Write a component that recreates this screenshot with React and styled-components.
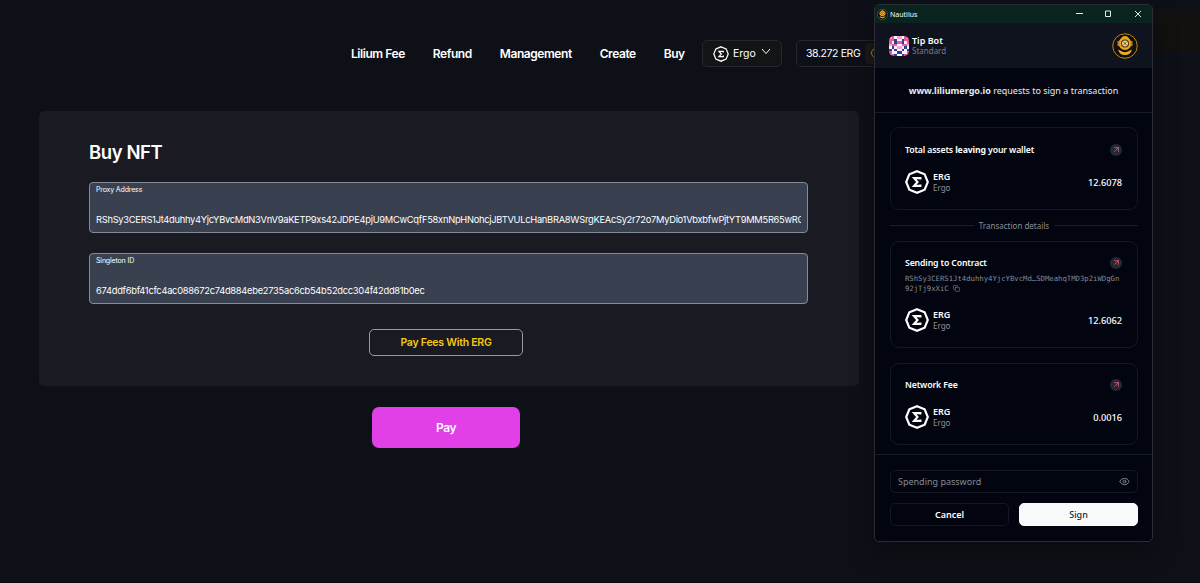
import React from "react";
import styled, { createGlobalStyle } from "styled-components";
import { LuArrowUpRight, LuCopy, LuEye } from "react-icons/lu";

const ADDRESS =
  "RShSy3CERS1Jt4duhhy4YjcYBvcMdN3VnV9aKETP9xs42JDPE4pjU9MCwCqfF58xnNpHNohcjJBTVULcHanBRA8WSrgKEAcSy2r72o7MyDio1VbxbfwPjtYT9MM5R65wRG";
const SINGLETON =
  "674ddf6bf41cfc4ac088672c74d884ebe2735ac6cb54b52dcc304f42dd81b0ec";

const LINKS = ["Lilium Fee", "Refund", "Management", "Create", "Buy"];

// p: pink, b: blue, w: white, l: light pink
const AVATAR = [
  "lpwllwpl",
  "ppbwwbpp",
  "pwbppbwp",
  "lppwwppl",
  "wbwllwbw",
  "bwbwwbwb",
  "pwwbbwwp",
  "lpbwwbpl",
];
const AVATAR_COLORS = { p: "#e85f96", b: "#343a9b", w: "#fbf3fa", l: "#f6a3cd" };

const ErgoLogo = ({ size, stroke = 8 }) => (
  <svg width={size} height={size} viewBox="0 0 100 100" fill="none">
    <path
      d="M50 5 82 18 95 50 82 82 50 95 18 82 5 50 18 18Z"
      stroke="#fff"
      strokeWidth={stroke}
    />
    <path
      d="M64 40V34H38L52 50 38 66H64V60"
      stroke="#fff"
      strokeWidth={stroke}
    />
  </svg>
);

const Avatar = () => (
  <svg width="20" height="20" viewBox="0 0 8 8" shapeRendering="crispEdges">
    {AVATAR.map((row, y) =>
      row
        .split("")
        .map((c, x) => (
          <rect
            key={`${x}-${y}`}
            x={x}
            y={y}
            width="1"
            height="1"
            fill={AVATAR_COLORS[c]}
          />
        ))
    )}
  </svg>
);

const DiverLogo = ({ size }) => (
  <svg width={size} height={size} viewBox="0 0 52 52">
    <circle cx="26" cy="26" r="24.5" fill="#11100e" stroke="#bd8618" strokeWidth="2" />
    <path d="M20 8Q26 4 32 8L34 12H18Z" fill="#e9a51c" />
    <circle cx="26" cy="21" r="13" fill="#eaa51c" />
    <path d="M11 16h4v10h-4zM37 16h4v10h-4z" fill="#c47f12" />
    <circle cx="26" cy="21" r="8" fill="#4a3510" />
    <circle cx="26" cy="21" r="6" fill="#f2d58a" />
    <path d="M22 17l8 8M30 17l-8 8" stroke="#3a2b10" strokeWidth="1.4" />
    <path d="M12 33Q18 36 20 37Q26 40 32 37Q34 36 40 33Q37 44 26 44Q15 44 12 33Z" fill="#f3ae20" />
  </svg>
);

const Asset = ({ amount }) => (
  <AssetRow>
    <ErgoLogo size={24} stroke={9} />
    <AssetName>
      <b>ERG</b>
      <span>Ergo</span>
    </AssetName>
    <Amount>{amount}</Amount>
  </AssetRow>
);

const CardHead = ({ children }) => (
  <CardTitle>
    <span>{children}</span>
    <OutBadge>
      <LuArrowUpRight size={9} />
    </OutBadge>
  </CardTitle>
);

const Wallet = () => (
  <WalletWindow>
    <TitleBar>
      <DiverLogo size={11} />
      <span>Nautilus</span>
      <Controls viewBox="0 0 68 10">
        <path d="M2 4.5h7M31.5 2h5v5.500h-5zM61 2l6 6M67 2l-6 6" />
      </Controls>
    </TitleBar>
    <Account>
      <AvatarFrame>
        <Avatar />
      </AvatarFrame>
      <AccountName>
        <b>Tip Bot</b>
        <span>Standard</span>
      </AccountName>
      <DiverLogo size={26} />
    </Account>
    <RequestLine>
      <b>www.liliumergo.io</b>&nbsp;requests to sign a transaction
    </RequestLine>
    <Details>
      <Card $height={83}>
        <CardHead>
          Total assets <b>leaving</b> your wallet
        </CardHead>
        <Asset amount="12.6078" />
      </Card>
      <Divider>Transaction details</Divider>
      <Card $height={107} $pad={13}>
        <CardHead>Sending to Contract</CardHead>
        <Contract>
          RShSy3CERS1Jt4duhhy4YjcYBvcMd…SDMeahqTMD3p2iWDgGn
          <br />
          92jTj9xXiC <LuCopy size={7} />
        </Contract>
        <Asset amount="12.6062" />
      </Card>
      <Card $height={82} $top={15} $pad={13}>
        <CardHead>Network Fee</CardHead>
        <Asset amount="0.0016" />
      </Card>
    </Details>
    <SignArea>
      <Password>
        <span>Spending password</span>
        <LuEye size={11} />
      </Password>
      <Actions>
        <WalletButton>Cancel</WalletButton>
        <WalletButton $primary>Sign</WalletButton>
      </Actions>
    </SignArea>
  </WalletWindow>
);

const App = () => {
  return (
    <Page>
      <GlobalStyle />
      <Nav>
        <Links>
          {LINKS.map((link) => (
            <a key={link}>{link}</a>
          ))}
        </Links>
        <NetworkSelect>
          <ErgoLogo size={16} />
          <span>Ergo</span>
          <svg width="10" height="7" viewBox="0 0 10 7" fill="none" stroke="#fff">
            <path d="M1 1l4 4.500L9 1" />
          </svg>
        </NetworkSelect>
        <Balance>
          <span>38.272 ERG</span>
          <AddressPill>
            <i />
          </AddressPill>
        </Balance>
        <Notice />
      </Nav>
      <Panel>
        <Title>Buy NFT</Title>
        <Field>
          <label>Proxy Address</label>
          <Value>{ADDRESS}</Value>
        </Field>
        <Field>
          <label>Singleton ID</label>
          <Value>{SINGLETON}</Value>
        </Field>
        <FeeButton>Pay Fees With ERG</FeeButton>
      </Panel>
      <PayButton>Pay</PayButton>
      <Wallet />
    </Page>
  );
};

export default App;

const GlobalStyle = createGlobalStyle`
  * {
    box-sizing: border-box;
  }
  body {
    margin: 0;
    background: #0d1017;
    overflow: hidden;
  }
  button {
    font-family: inherit;
    padding: 0;
  }
  svg {
    flex: none;
  }
`;
const Page = styled.div`
  position: relative;
  width: 1200px;
  height: 583px;
  overflow: hidden;
  background: #0d1017;
  border-bottom: 1px solid #05070b;
  color: #fff;
  font-family: Inter, "Liberation Sans", sans-serif;
`;
const Nav = styled.nav`
  height: 111px;
  padding: 40px 0 0 351px;
  display: flex;
  align-items: flex-start;
`;
const Links = styled.div`
  width: 351px;
  height: 27px;
  display: flex;
  align-items: center;
  gap: 28px;
  font-size: 12px;
  font-weight: 600;
  letter-spacing: -0.44px;
  white-space: nowrap;
`;
const NetworkSelect = styled.div`
  width: 80px;
  height: 27px;
  display: flex;
  align-items: center;
  padding-left: 10px;
  gap: 4px;
  border: 1px solid #25272c;
  border-radius: 5px;
  background: #131415;
  font-size: 10.5px;
  svg:last-child {
    margin: -5px 0 0 1px;
  }
`;
const Balance = styled.div`
  width: 190px;
  height: 27px;
  margin-left: 14px;
  padding-left: 9px;
  display: flex;
  align-items: center;
  justify-content: space-between;
  border: 1px solid #25272c;
  border-radius: 5px;
  font-size: 10.5px;
  letter-spacing: -0.4px;
`;
const AddressPill = styled.div`
  width: 120px;
  height: 21px;
  padding: 5px 6px;
  border-radius: 4px;
  background: #1b1a18;
  i {
    display: block;
    width: 10px;
    height: 10px;
    border: 1px solid #a9831e;
    border-radius: 50%;
  }
`;
const Notice = styled.div`
  flex: 1;
  height: 42px;
  margin: -31px 0 0 14px;
  background: #12110f;
`;
const Panel = styled.main`
  width: 820px;
  height: 275px;
  margin-left: 39px;
  padding: 29px 51px 0 50px;
  background: #1a1a22;
  border-radius: 5px;
`;
const Title = styled.h1`
  height: 42px;
  margin: 0;
  font-size: 18.5px;
  line-height: 24px;
  font-weight: 600;
  letter-spacing: -0.4px;
`;
const Field = styled.div`
  height: 51px;
  margin-bottom: 20px;
  padding: 0 6px;
  border: 1px solid #858b95;
  border-radius: 4px;
  background: #394150;
  label {
    display: block;
    height: 30px;
    font-size: 7px;
    line-height: 13px;
    letter-spacing: -0.15px;
  }
`;
const Value = styled.div`
  overflow: hidden;
  white-space: nowrap;
  font-size: 9.3px;
  line-height: 14px;
  letter-spacing: -0.26px;
`;
const FeeButton = styled.button`
  display: block;
  width: 154px;
  height: 27px;
  margin: 25px 0 0 280px;
  border: 1px solid #989aa0;
  border-radius: 5px;
  background: none;
  color: #f5c914;
  font-size: 10.5px;
  font-weight: 600;
  letter-spacing: -0.25px;
`;
const PayButton = styled.button`
  display: block;
  width: 148px;
  height: 41px;
  margin: 21px 0 0 372px;
  border: 0;
  border-radius: 7px;
  background: #e040e6;
  color: #fff;
  font-size: 12px;
  font-weight: 600;
  letter-spacing: -0.4px;
`;
// popup window floating over the page
const WalletWindow = styled.aside`
  position: absolute;
  top: 4px;
  left: 874px;
  width: 279px;
  height: 538px;
  border: 1px solid #2a2d33;
  border-radius: 5px;
  background: #02050f;
  box-shadow: 0 10px 24px rgba(0, 0, 0, 0.35);
  overflow: hidden;
  font-family: "Noto Sans", "Open Sans", sans-serif;
  font-size: 9px;
`;
const TitleBar = styled.div`
  height: 18px;
  padding: 0 10px 0 2px;
  display: flex;
  align-items: center;
  gap: 2px;
  background: #09231f;
  font-size: 7px;
  font-weight: 400;
`;
const Controls = styled.svg`
  width: 68px;
  height: 10px;
  margin-left: auto;
  fill: none;
  stroke: #e5eae9;
`;
const Account = styled.div`
  height: 45px;
  padding: 0 14px;
  display: flex;
  align-items: center;
  gap: 3px;
  background: #0f131d;
`;
const AvatarFrame = styled.div`
  width: 20px;
  height: 20px;
  border-radius: 5px;
  overflow: hidden;
`;
const AccountName = styled.div`
  flex: 1;
  display: flex;
  flex-direction: column;
  line-height: 10px;
  b {
    font-size: 9px;
    font-weight: 600;
  }
  span {
    color: #777b86;
    font-size: 8px;
  }
`;
const RequestLine = styled.div`
  height: 45px;
  display: flex;
  align-items: center;
  justify-content: center;
  border-bottom: 1px solid #171b25;
  color: #e9ebef;
  b {
    font-weight: 700;
  }
`;
const Details = styled.div`
  height: 342px;
  padding: 14px 14px 0 15px;
  border-bottom: 1px solid #171b25;
`;
const Card = styled.section`
  height: ${(props) => props.$height}px;
  margin-top: ${(props) => props.$top || 0}px;
  padding: ${(props) => props.$pad || 14}px 15px 0 14px;
  display: flex;
  flex-direction: column;
  border: 1px solid #131823;
  border-radius: 9px;
`;
const CardTitle = styled.div`
  height: 15px;
  display: flex;
  align-items: center;
  justify-content: space-between;
  font-size: 8.7px;
  font-weight: 600;
  letter-spacing: -0.13px;
  b {
    font-weight: 700;
  }
`;
const OutBadge = styled.div`
  width: 12px;
  height: 12px;
  display: grid;
  place-items: center;
  border-radius: 50%;
  background: #222a35;
  color: #e76579;
`;
const AssetRow = styled.div`
  margin: auto 0 15px;
  height: 24px;
  display: flex;
  align-items: center;
  gap: 4px;
`;
const AssetName = styled.div`
  flex: 1;
  display: flex;
  flex-direction: column;
  line-height: 11px;
  b {
    font-size: 9px;
    font-weight: 600;
  }
  span {
    color: #8c909a;
    font-size: 8px;
  }
`;
const Amount = styled.div`
  font-size: 9.2px;
  font-weight: 500;
`;
const Divider = styled.div`
  height: 31px;
  display: flex;
  align-items: center;
  gap: 5px;
  color: #8a8e98;
  font-size: 8px;
  &::before,
  &::after {
    content: "";
    flex: 1;
    height: 1px;
    background: #181d28;
  }
`;
const Contract = styled.div`
  margin-top: 4px;
  color: #858994;
  font-family: "DejaVu Sans Mono", monospace;
  font-size: 7.27px;
  line-height: 10px;
  white-space: nowrap;
  svg {
    vertical-align: -1px;
  }
`;
const SignArea = styled.div`
  padding: 15px 14px 0 15px;
`;
const Password = styled.div`
  height: 23px;
  padding: 0 7px;
  display: flex;
  align-items: center;
  justify-content: space-between;
  border: 1px solid #131823;
  border-radius: 5px;
  color: #858a96;
`;
const Actions = styled.div`
  margin-top: 10px;
  display: grid;
  grid-template-columns: 1fr 1fr;
  gap: 10px;
`;
const WalletButton = styled.button`
  height: 23px;
  border: 1px solid ${(props) => (props.$primary ? "#f8fafc" : "#131823")};
  border-radius: 5px;
  background: ${(props) => (props.$primary ? "#f8fafc" : "transparent")};
  color: ${(props) => (props.$primary ? "#202431" : "#fff")};
  font-size: 9px;
  font-weight: ${(props) => (props.$primary ? 500 : 600)};
`;
